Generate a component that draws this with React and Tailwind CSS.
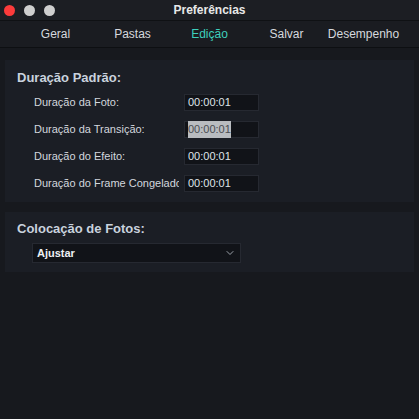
import { ChevronDown } from "lucide-react";

const tabs = ["Geral", "Pastas", "Edição", "Salvar", "Desempenho"];

const rows = [
  { label: "Duração da Foto:", value: "00:00:01" },
  { label: "Duração da Transição:", value: "00:00:01", selected: true },
  { label: "Duração do Efeito:", value: "00:00:01" },
  { label: "Duração do Frame Congelado:", value: "00:00:01" },
];

export default function App() {
  return (
    <div className="w-[419px] h-[419px] bg-[#17191e] flex flex-col font-['Liberation_Sans',Arial,sans-serif] overflow-hidden">
      {/* title bar */}
      <div className="h-[21px] flex items-center border-b border-[#0f1114] bg-[#1c1e23] relative">
        <div className="flex gap-[9px] pl-[4px]">
          <span className="w-[11px] h-[11px] rounded-full bg-[#fc3b3b]" />
          <span className="w-[11px] h-[11px] rounded-full bg-[#cfcfcf]" />
          <span className="w-[11px] h-[11px] rounded-full bg-[#cfcfcf]" />
        </div>
        <span className="absolute left-0 right-0 text-center text-[12px] font-bold text-[#e8e8e8]">
          Preferências
        </span>
      </div>

      {/* tabs */}
      <div className="h-[27px] flex items-center px-[17px] border-b border-[#0d0f12] bg-[#1a1c21]">
        {tabs.map((t) => (
          <div
            key={t}
            className={
              "flex-1 text-center text-[12px] " +
              (t === "Edição" ? "text-[#3ecfbc]" : "text-[#d6d9de]")
            }
          >
            {t}
          </div>
        ))}
      </div>

      <div className="flex flex-col gap-[10px] px-[5px] pt-[12px]">
        <div className="bg-[#1b1e25] pt-[10px] pb-[10px]">
          <div className="pl-[12px] text-[13px] leading-[16px] font-bold text-[#c9d2de]">Duração Padrão:</div>
          <div className="flex flex-col gap-[10px] mt-[8px] pl-[29px]">
            {rows.map((r) => (
              <div key={r.label} className="flex items-center h-[17px]">
                <div className="w-[145px] mr-[5px] overflow-hidden whitespace-nowrap text-[11px] text-[#d3d7de]">
                  {r.label}
                </div>
                <div className="w-[75px] h-[17px] bg-[#111318] border border-[#262931] flex items-center px-[3px] text-[11px] text-[#dfe3e8]">
                  {r.selected ? (
                    <span className="bg-[#b9bcc0] text-[#4a4d52]">{r.value}</span>
                  ) : (
                    r.value
                  )}
                </div>
              </div>
            ))}
          </div>
        </div>

        <div className="bg-[#1b1e25] pt-[9px] pb-[9px]">
          <div className="pl-[12px] text-[13px] leading-[16px] font-bold text-[#c9d2de]">Colocação de Fotos:</div>
          <div className="mt-[6px] ml-[27px] w-[209px] h-[20px] bg-[#111318] border border-[#262931] flex items-center justify-between px-[4px]">
            <span className="text-[11px] font-bold text-[#eef0f3]">Ajustar</span>
            <ChevronDown size={12} strokeWidth={2} className="text-[#9aa0a8]" />
          </div>
        </div>
      </div>
    </div>
  );
}
